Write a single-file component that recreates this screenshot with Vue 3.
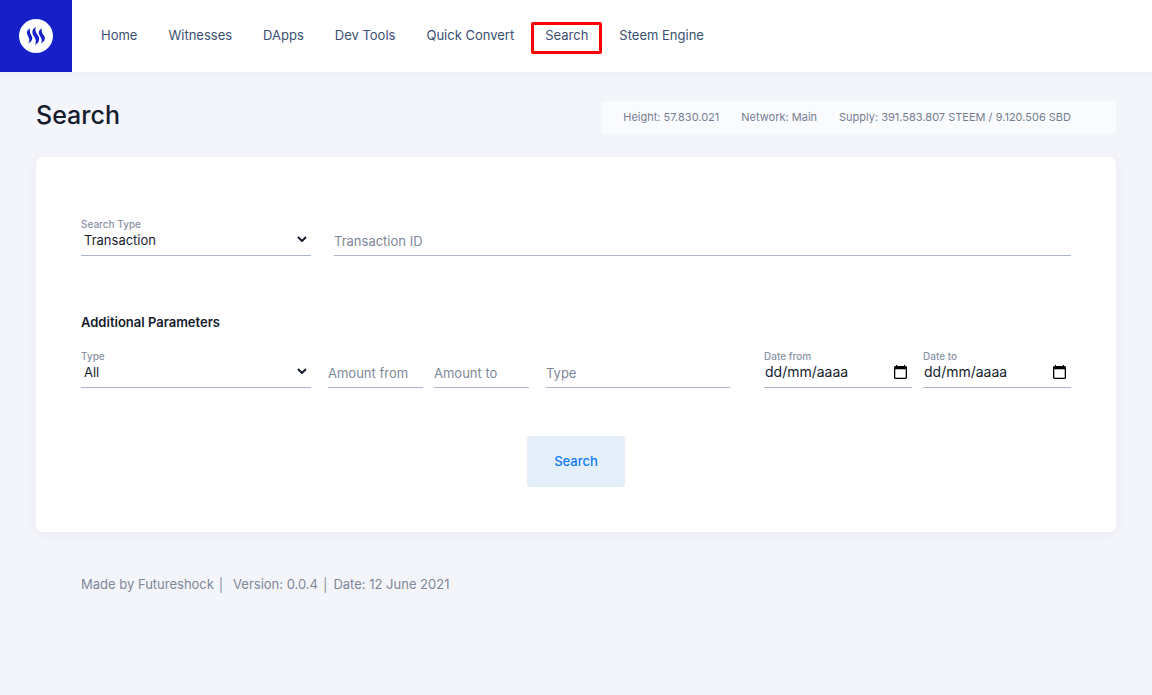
<script setup>
import { ref } from 'vue'

const links = ['Home', 'Witnesses', 'DApps', 'Dev Tools', 'Quick Convert', 'Search', 'Steem Engine']
const stats = ['Height: 57.830.021', 'Network: Main', 'Supply: 391.583.807 STEEM / 9.120.506 SBD']
const dates = [
  { id: 'date-from', label: 'Date from' },
  { id: 'date-to', label: 'Date to' },
]
const searchType = ref('Transaction')
const type = ref('All')
</script>

<template>
  <div class="page">
    <header class="topbar">
      <a class="logo" href="#" aria-label="Steem">
        <svg viewBox="0 0 34 34" width="34" height="34" aria-hidden="true">
          <circle cx="17" cy="17" r="17" fill="#fff" />
          <g fill="#171fc9">
            <path d="M11.2 9.6C9 10.3 7.6 12.2 8 14.4C8.4 16.6 10.2 18.3 10.3 20.7C10.4 22.2 9.9 23.3 9.3 24.4C11.9 23.3 13.6 21.2 13.2 18.6C12.9 16.5 11.2 15 10.9 12.9C10.7 11.6 10.8 10.6 11.2 9.6Z" />
            <path d="M16.9 8.1C14.6 9.1 13 11.3 13.4 13.9C13.8 16.5 16.5 18.4 16.8 21.4C17 23.3 16.6 24.7 15.9 26.2C18.7 24.8 20.6 22.2 20.1 19.1C19.7 16.5 17 14.7 16.5 12.1C16.2 10.6 16.4 9.4 16.9 8.1Z" />
            <path d="M23.1 9.6C20.9 10.3 19.4 12.2 19.8 14.4C20.2 16.6 22.4 18.3 22.7 20.7C22.9 22.2 22.5 23.3 21.9 24.4C24.6 23.3 26.2 21.2 25.8 18.6C25.5 16.5 23.3 15 22.8 12.9C22.5 11.6 22.7 10.6 23.1 9.6Z" />
          </g>
        </svg>
      </a>
      <nav class="nav">
        <a v-for="link in links" :key="link" href="#" :class="{ marked: link === 'Search' }">{{ link }}</a>
      </nav>
    </header>

    <main class="content">
      <div class="heading">
        <h1>Search</h1>
        <div class="stats">
          <span v-for="stat in stats" :key="stat">{{ stat }}</span>
        </div>
      </div>

      <form class="card" @submit.prevent>
        <div class="row main-row">
          <div class="field">
            <label for="search-type">Search Type</label>
            <div class="select">
              <select id="search-type" v-model="searchType">
                <option>Transaction</option>
              </select>
              <svg viewBox="0 0 10 6" width="10" height="6" aria-hidden="true"><path d="M1 1l4 4 4-4" /></svg>
            </div>
          </div>
          <div class="field">
            <input type="text" placeholder="Transaction ID" aria-label="Transaction ID" />
          </div>
        </div>

        <h2>Additional Parameters</h2>

        <div class="row params-row">
          <div class="field">
            <label for="type">Type</label>
            <div class="select">
              <select id="type" v-model="type">
                <option>All</option>
              </select>
              <svg viewBox="0 0 10 6" width="10" height="6" aria-hidden="true"><path d="M1 1l4 4 4-4" /></svg>
            </div>
          </div>
          <div class="amounts">
            <div class="field">
              <input type="text" placeholder="Amount from" aria-label="Amount from" />
            </div>
            <div class="field">
              <input type="text" placeholder="Amount to" aria-label="Amount to" />
            </div>
          </div>
          <div class="field">
            <input type="text" placeholder="Type" aria-label="Asset type" />
          </div>
          <div class="dates">
            <div v-for="date in dates" :key="date.id" class="field">
              <label :for="date.id">{{ date.label }}</label>
              <div class="date">
                <input :id="date.id" type="text" placeholder="dd/mm/aaaa" />
                <button type="button" :aria-label="`Open calendar, ${date.label}`">
                  <svg viewBox="0 0 13 14" width="13" height="14" aria-hidden="true">
                    <path fill-rule="evenodd" d="M2 0h1v1h7V0h1v1h1l1 1v11l-1 1H1l-1-1V2l1-1h1zM1.3 4.3v8.4h10.4V4.3z" />
                  </svg>
                </button>
              </div>
            </div>
          </div>
        </div>

        <button class="submit" type="submit">Search</button>
      </form>
    </main>

    <footer class="footer">Made by Futureshock │&nbsp; Version: 0.0.4 │ Date: 12 June 2021</footer>
  </div>
</template>

<style>
body {
  margin: 0;
  background: #f4f5fa;
}
</style>

<style scoped>
.page {
  min-height: 100vh;
  background: #f4f5fa;
  color: #161c2d;
  font: 400 13px/20px Inter, "Liberation Sans", sans-serif;
}

.page *,
.page *::before {
  box-sizing: border-box;
}

.topbar {
  display: flex;
  height: 72px;
  background: #fff;
  box-shadow: 0 3px 12px rgba(60, 60, 140, 0.04);
}

.logo {
  display: grid;
  place-items: center;
  width: 72px;
  background: #171fc9;
}

.nav {
  display: flex;
  align-items: center;
  gap: 31px;
  padding: 0 29px 2px;
}

.nav a {
  position: relative;
  color: #3b4f72;
  text-decoration: none;
  white-space: nowrap;
}

.marked::before {
  content: "";
  position: absolute;
  inset: -3px -14px -9px;
  border: 3px solid #f00;
  border-radius: 2px;
}

.content {
  padding: 29px 36px 0;
}

.heading {
  display: flex;
  align-items: center;
  justify-content: space-between;
  margin-bottom: 23px;
}

h1 {
  margin: 0;
  padding-bottom: 4px;
  font-size: 25px;
  line-height: 29px;
  font-weight: 500;
}

.stats {
  display: flex;
  gap: 22px;
  padding: 6px 45px 6px 22px;
  border-radius: 4px;
  background: #fafbff;
  color: #747d90;
  font-size: 11px;
  line-height: 21px;
}

.card {
  padding: 61px 45px 45px;
  border-radius: 7px;
  background: #fff;
  box-shadow: 0 3px 12px rgba(60, 60, 140, 0.05);
}

.row {
  display: grid;
  align-items: end;
}

.main-row {
  grid-template-columns: 230fr 737fr;
  gap: 23px;
}

.params-row {
  grid-template-columns: 230fr 201fr 201fr 307fr;
  gap: 17px;
}

.params-row > .field:nth-child(3) {
  margin-right: 17px;
}

.amounts,
.dates {
  display: grid;
  grid-template-columns: 1fr 1fr;
  gap: 11px;
}

.amounts {
  align-items: end;
}

.field {
  min-width: 0;
  border-bottom: 1px solid #abb6c9;
}

.field label {
  display: block;
  color: #8a92a6;
  font-size: 10px;
  line-height: 12px;
  font-weight: 500;
}

.field input,
.field select {
  display: block;
  width: 100%;
  height: 25px;
  margin: 0;
  padding: 0 0 4px;
  border: 0;
  outline: 0;
  background: transparent;
  color: #161c2d;
  font: inherit;
}

.field input::placeholder {
  color: #7e8799;
  opacity: 1;
}

.select {
  position: relative;
}

.field select {
  appearance: none;
  padding: 0 20px 9px 3px;
}

.select svg {
  position: absolute;
  top: 6px;
  right: 4px;
  fill: none;
  stroke: #161c2d;
  stroke-width: 2;
  pointer-events: none;
}

.date {
  display: flex;
}

.field .date input {
  padding: 0 0 7px 1px;
  font-size: 14px;
}

.date input::placeholder {
  color: #161c2d;
}

.date button {
  flex: none;
  height: 20px;
  margin: 0;
  padding: 0 5px 0 0;
  border: 0;
  background: none;
}

.date svg {
  display: block;
}

h2 {
  margin: 56px 0 18px;
  font-size: 13px;
  line-height: 20px;
  font-weight: 600;
}

.submit {
  display: block;
  margin: 48px auto 0;
  padding: 15px 27px 16px;
  border: 0;
  border-radius: 3px;
  background: #e4eff9;
  color: #0f7bff;
  font: inherit;
  font-weight: 500;
}

.footer {
  padding: 42px 81px 0;
  color: #7e8799;
}
</style>
